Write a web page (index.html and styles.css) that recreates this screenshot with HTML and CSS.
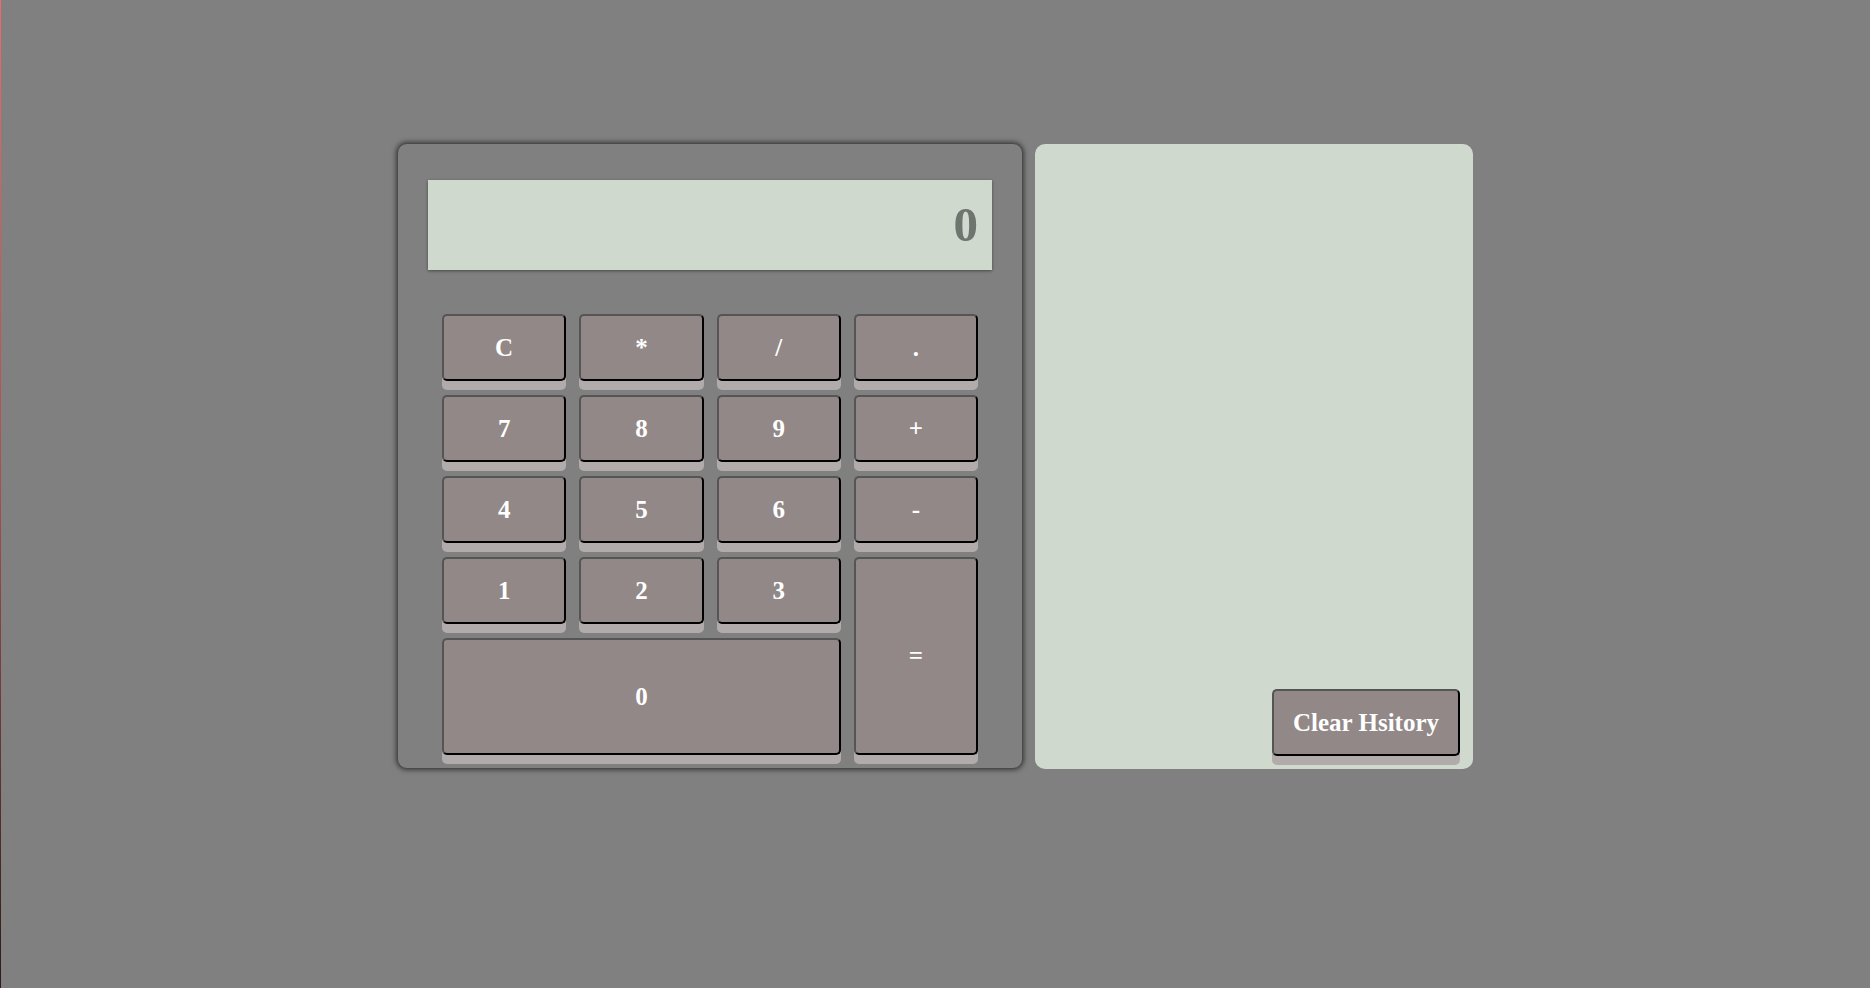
FILE: index.html
```html
<!DOCTYPE html>
<html>
<head>
<meta charset="utf-8">
<link rel="stylesheet" href="styles.css">
</head>
<body>
<div class="edge"></div>
<main class="app">
  <section class="calculator">
    <div class="display">0</div>
    <div class="keys">
      <button class="key">C</button>
      <button class="key">*</button>
      <button class="key">/</button>
      <button class="key">.</button>
      <button class="key">7</button>
      <button class="key">8</button>
      <button class="key">9</button>
      <button class="key">+</button>
      <button class="key">4</button>
      <button class="key">5</button>
      <button class="key">6</button>
      <button class="key">-</button>
      <button class="key">1</button>
      <button class="key">2</button>
      <button class="key">3</button>
      <button class="key key-equals">=</button>
      <button class="key key-zero">0</button>
    </div>
  </section>
  <section class="history">
    <button class="key clear-history">Clear Hsitory</button>
  </section>
</main>
</body>
</html>
```

FILE: styles.css
```css
html, body {
  margin: 0;
  padding: 0;
}
body {
  background: #808080;
  min-height: 100vh;
  font-family: "Liberation Serif", "Times New Roman", serif;
  position: relative;
}
.edge {
  position: absolute;
  left: 0;
  top: 0;
  width: 1px;
  height: 988px;
  background: linear-gradient(to bottom, #f06a6a 0%, #a55050 50%, #2a1d1b 100%);
}
.app {
  display: flex;
  justify-content: center;
  align-items: flex-start;
  gap: 12px;
  padding-top: 143px;
}
.calculator {
  box-sizing: border-box;
  width: 626px;
  height: 626px;
  background: #808080;
  border: 1px solid #4a4a4a;
  border-radius: 10px;
  box-shadow: 0 0 5px 1px rgba(0,0,0,0.55);
  padding: 36px 30px 0 30px;
}
.display {
  height: 90px;
  background: #cfd9ce;
  box-shadow: 0 1px 3px rgba(0,0,0,0.45);
  color: #6e746e;
  font-weight: bold;
  font-size: 49px;
  line-height: 90px;
  text-align: right;
  padding-right: 14px;
  box-sizing: border-box;
}
.keys {
  margin: 44px 14px 0 14px;
  display: grid;
  grid-template-columns: repeat(4, 1fr);
  grid-template-rows: 67px 67px 67px 67px 117px;
  column-gap: 13px;
  row-gap: 14px;
}
.key {
  box-sizing: border-box;
  background: #918887;
  color: #ffffff;
  font-family: "Liberation Serif", "Times New Roman", serif;
  font-weight: bold;
  font-size: 25px;
  border-style: solid;
  border-width: 2px;
  border-color: #555555 #000000 #000000 #555555;
  border-radius: 5px;
  box-shadow: 0 9px 0 #b1acab;
  padding: 0;
  margin: 0;
}
.key-equals {
  grid-column: 4;
  grid-row: 4 / span 2;
}
.key-zero {
  grid-column: 1 / span 3;
  grid-row: 5;
}
.history {
  box-sizing: border-box;
  width: 438px;
  height: 625px;
  margin-top: 1px;
  background: #cfd9ce;
  border-radius: 10px;
  display: flex;
  justify-content: flex-end;
  align-items: flex-end;
  padding: 0 13px 13px 0;
}
.clear-history {
  width: 188px;
  height: 67px;
}
```
